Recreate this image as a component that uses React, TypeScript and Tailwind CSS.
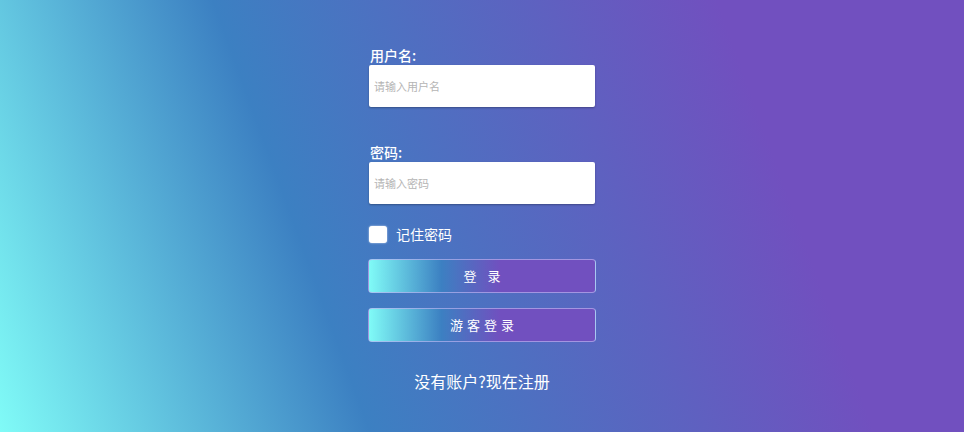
import React from "react";

export default function App() {
  return (
    <div className="w-[964px] h-[432px] overflow-hidden bg-[linear-gradient(70deg,#80fbf7_0%,#3c80c2_33%,#7150bf_78%)] font-['Noto_Sans_CJK_SC','Noto_Sans',sans-serif] text-white">
      <div className="mx-auto w-[228px] pt-[46px] flex flex-col">
        <label className="block pl-[2px] text-[14px] leading-[18px] font-medium mb-[1px]">用户名:</label>
        <div className="mx-[1px] h-[42px] bg-white rounded-[2px] shadow-[0_1px_2px_rgba(0,0,0,0.3)] flex items-center pl-[5px]">
          <input
            className="w-full outline-none bg-transparent text-[11px] text-gray-800 placeholder:text-[#b5b5b5]"
            placeholder="请输入用户名"
          />
        </div>
        <label className="block pl-[2px] mt-[36px] text-[14px] leading-[18px] font-medium mb-[1px]">密码:</label>
        <div className="mx-[1px] h-[42px] bg-white rounded-[2px] shadow-[0_1px_2px_rgba(0,0,0,0.3)] flex items-center pl-[5px]">
          <input
            type="password"
            className="w-full outline-none bg-transparent text-[11px] text-gray-800 placeholder:text-[#b5b5b5]"
            placeholder="请输入密码"
          />
        </div>
        <div className="mt-[21px] flex items-center pl-[1px] h-[18px]">
          <span className="w-[18px] h-[17px] bg-white rounded-[3px] shadow-[0_0_2px_rgba(255,255,255,0.8)]" />
          <span className="ml-[9px] text-[14px] leading-[18px]">记住密码</span>
        </div>
        <button className="mt-[16px] h-[34px] w-full rounded-[4px] border border-[#b9b2f0]/70 bg-[linear-gradient(to_right,#80fbf7_0%,#3c80c2_32%,#7150bf_58%,#7150bf_100%)] text-[13px] tracking-[4px] pl-[4px] text-white">
          登 录
        </button>
        <button className="mt-[15px] h-[34px] w-full rounded-[4px] border border-[#b9b2f0]/70 bg-[linear-gradient(to_right,#80fbf7_0%,#3c80c2_32%,#7150bf_58%,#7150bf_100%)] text-[13px] tracking-[4px] pl-[4px] text-white">
          游客登录
        </button>
        <div className="mt-[27px] text-center text-[16px] leading-[24px]">没有账户?现在注册</div>
      </div>
    </div>
  );
}
